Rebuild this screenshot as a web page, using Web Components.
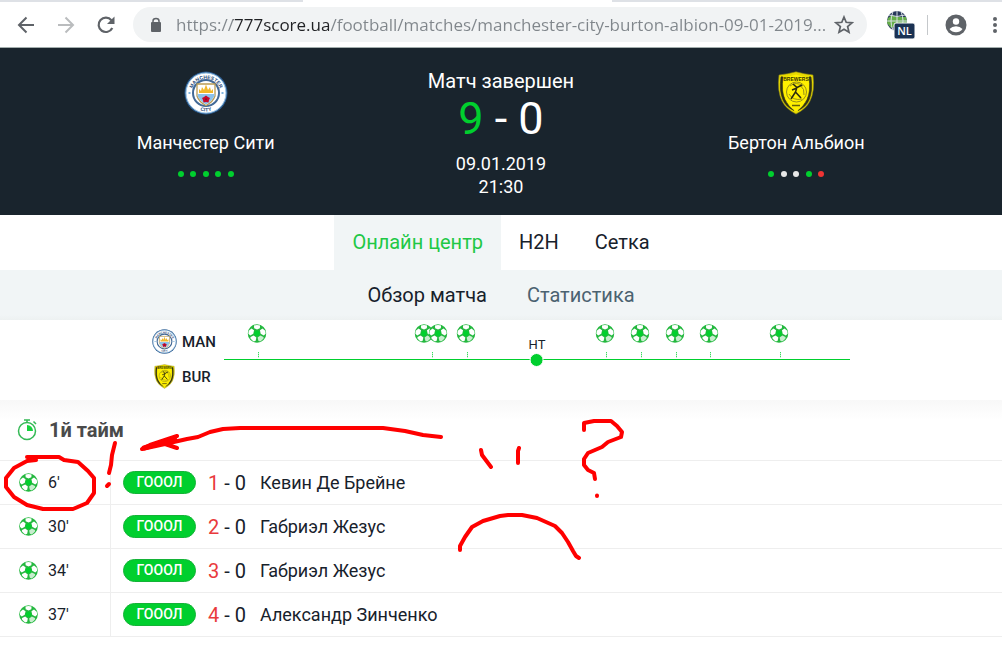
<!DOCTYPE html>
<html lang="ru">
<head>
<meta charset="utf-8">
<title>Манчестер Сити - Бертон Альбион</title>
<style>
    body {
        margin: 0;
        position: relative;
        overflow-x: hidden;
        background: #fff;
        color: #17212b;
        font-family: Roboto, "Liberation Sans", sans-serif;
        --green: #00cf2e;
        --dark: #19242d;
        --pale: #f1f5f6;
    }
</style>
</head>
<body>
<browser-bar></browser-bar>
<match-header>
    <team-card slot="home" form="wwwww">
        <club-crest slot="crest" club="city"></club-crest>
        Манчестер Сити
    </team-card>
    <team-card slot="away" form="wddwl">
        <club-crest slot="crest" club="burton"></club-crest>
        Бертон Альбион
    </team-card>
</match-header>
<match-tabs></match-tabs>
<match-timeline></match-timeline>
<match-events>1й тайм</match-events>
<pen-marks></pen-marks>

<script>
(function() {
    function define(name, html, setup) {
        const template = document.createElement("template")
        template.innerHTML = html
        customElements.define(name, class extends HTMLElement {
            constructor() {
                super()
                this.attachShadow({mode: "open"})
                this.shadowRoot.appendChild(template.content.cloneNode(true))
            }
            connectedCallback() {
                if (setup) setup(this, this.shadowRoot)
            }
        })
    }

    define("soccer-ball", `
<style>
    :host { display: block; width: 19px; height: 19px; }
    svg { display: block; width: 100%; height: 100%; }
</style>
<svg viewBox="0 0 20 20" aria-hidden="true">
    <circle cx="10" cy="10" r="9.8" fill="#24b83f"/>
    <g fill="#fff">
        <path d="M6.8 1.6Q10 .6 13.2 1.6L13 4.4 10 5.9 7 4.4Z"/>
        <path d="M1.3 7.2 4.2 4.7 6.9 6.7 6.1 10.2 2.9 12 .9 10.3Z"/>
        <path d="M18.7 7.2 15.8 4.7 13.1 6.7 13.9 10.2 17.1 12 19.1 10.3Z"/>
        <path d="M3.2 13.7 6.5 12 9.3 14.2 8.6 17.7 6.6 18.4Q4.5 17 3 15Z"/>
        <path opacity=".75" d="M16.8 13.7 13.5 12 10.7 14.2 11.4 17.7 13.4 18.4Q15.5 17 17 15Z"/>
    </g>
    <path d="M10 6.5 13.2 8.8 12 12.5H8L6.8 8.8Z" fill="#00d02c"/>
</svg>`)

    const crests = {
        city: `
<svg viewBox="0 0 44 44" role="img" aria-label="Manchester City">
    <defs>
        <path id="top" d="M7.6 24A14.5 14.5 0 1 1 36.4 24"/>
        <path id="bottom" d="M8 34A18.5 18.5 0 0 0 36 34"/>
    </defs>
    <circle cx="22" cy="22" r="21.5" fill="#2b5c91"/>
    <circle cx="22" cy="22" r="20" fill="#fff" stroke="#9bc5e6"/>
    <circle cx="22" cy="22" r="13" fill="#fff" stroke="#426996" stroke-width="2"/>
    <g font-family="Liberation Sans, sans-serif" font-weight="700" font-size="5" fill="#294b78" text-anchor="middle">
        <text><textPath href="#top" startOffset="50%">MANCHESTER</textPath></text>
        <text><textPath href="#bottom" startOffset="50%">CITY</textPath></text>
    </g>
    <path d="M13 13H31V25Q29 31 22 34.5 15 31 13 25Z" fill="#fff" stroke="#b99b54" stroke-width="1.3"/>
    <path d="M13.6 23H30.4V25Q28 30 22 33.5 16 30 13.6 25Z" fill="#8bc2ec"/>
    <path d="M15 22V18L17 20 18 16 20 19 22 13.5 24 19 26 16 27 20 29 18V22Z" fill="#f1b82a"/>
    <path d="M22 24.5 24 26 26 27 25 29 24.5 31.5 22 31 19.5 31.5 19 29 18 27 20 26Z" fill="#c7082d"/>
    <circle cx="22" cy="28.3" r="1" fill="#7e1730"/>
    <path d="M4.5 22H6.5M37.5 22H39.5" stroke="#83b6df" stroke-width="2"/>
</svg>`,
        burton: `
<svg viewBox="0 0 44 44" role="img" aria-label="Burton Albion">
    <path d="M5 4Q14 3 22 .8 30 3 39 4 41 20 36 30 32 38 22 43 12 38 8 30 3 20 5 4Z" fill="#e8da00" stroke="#8b8418" stroke-width=".6"/>
    <path d="M7 6Q7 5.5 9 6 7 20 11 28.5 14 35 20 39.5 12 36 9 29 5 20 7 6ZM37 6Q37 5.5 35 6 37 20 33 28.5 30 35 24 39.5 32 36 35 29 39 20 37 6Z" fill="#2f3018" stroke="#2f3018" stroke-width=".6"/>
    <path d="M9.5 6.5Q16 5.5 22 3.5 28 5.5 34.5 6.5 36 20 32.5 28 29.5 35 22 40.5 14.5 35 11.5 28 8 20 9.5 6.5Z" fill="#fff000"/>
    <text x="22" y="9.5" text-anchor="middle" font-family="Liberation Sans, sans-serif" font-weight="700" font-size="5" fill="#343400">BREWERS</text>
    <g fill="none" stroke="#8a841c" stroke-width=".9">
        <circle cx="22.5" cy="21" r="10"/>
        <path d="M16 15Q22 10 29 15M15 23Q19 30 28 28M26 14Q31 18 30 24"/>
    </g>
    <path d="M19 13 23 16.5 28 14M23 16 21.5 21 27 27M21.5 21 17 28M23 17 18 19" fill="none" stroke="#2b2b10" stroke-width="1.5"/>
    <path d="M18 34.5H26" stroke="#64600b" stroke-width="1.5"/>
</svg>`
    }

    define("club-crest", `
<style>
    :host { display: block; width: 44px; height: 44px; }
    svg { display: block; width: 100%; height: 100%; }
</style>`, (host, root) => {
        root.innerHTML += crests[host.getAttribute("club")]
    })

    define("browser-bar", `
<style>
    :host {
        display: block;
        background: #fff;
        border-bottom: 1px solid #a3aead;
    }
    .tabs {
        display: grid;
        grid-template-columns: 303fr 309fr 390fr;
        height: 2px;
    }
    .tabs i { background: #dee1e6; }
    .tabs i:nth-child(2) { background: #fff; }
    nav {
        display: flex;
        align-items: center;
        height: 45px;
        padding-left: 6px;
    }
    button {
        display: grid;
        place-items: center;
        flex: none;
        width: 40px;
        height: 36px;
        padding: 0;
        border: 0;
        background: none;
    }
    form {
        display: flex;
        align-items: center;
        flex: 1;
        min-width: 0;
        height: 35px;
        margin: 0 7px;
        padding: 0 11px 0 17px;
        border-radius: 18px;
        background: #f1f3f4;
    }
    form button { width: 24px; }
    /* the host name is darker than the rest of the address */
    input {
        flex: 1;
        min-width: 0;
        height: 32px;
        margin: 0 3px 0 14px;
        padding: 0;
        border: 0;
        outline: 0;
        font: 17px "Open Sans", "Noto Sans", sans-serif;
        color: #80868b;
        background: linear-gradient(90deg, #80868b 57px, #202124 57px 154px, #80868b 154px);
        -webkit-background-clip: text;
        background-clip: text;
        -webkit-text-fill-color: transparent;
    }
    .extension { width: 52px; }
    hr {
        width: 1px;
        height: 20px;
        margin: 0 8px 0 1px;
        border: 0;
        background: #c5c8cb;
    }
    .more { width: 14px; margin-left: 12px; }
</style>
<div class="tabs"><i></i><i></i><i></i></div>
<nav>
    <button aria-label="Back"><svg width="20" height="20" fill="none" stroke="#5f6368" stroke-width="2"><path d="M18 10H3M10.5 2.5 3 10 10.5 17.5"/></svg></button>
    <button aria-label="Forward"><svg width="20" height="20" fill="none" stroke="#babcbe" stroke-width="2"><path d="M2 10H17M9.5 2.5 17 10 9.5 17.5"/></svg></button>
    <button aria-label="Reload"><svg width="20" height="20"><path d="M16.3 13A7.2 7.2 0 1 1 15.4 5.2" fill="none" stroke="#5f6368" stroke-width="2.2"/><path d="M18.5 1.5V9H11Z" fill="#5f6368"/></svg></button>
    <form>
        <svg width="12" height="16" aria-hidden="true"><path d="M3 7V4Q3 1.5 6 1.5T9 4V7" fill="none" stroke="#5f6368" stroke-width="1.5"/><rect x="1" y="5" width="10" height="10" rx="1" fill="#5f6368"/></svg>
        <input aria-label="Address" value="https://777score.ua/football/matches/manchester-city-burton-albion-09-01-2019...">
        <button type="button" aria-label="Bookmark"><svg width="20" height="20"><path d="M10 2 12.2 7.3 18 7.8 13.6 11.5 15 17.2 10 14.2 5 17.2 6.4 11.5 2 7.8 7.8 7.3Z" fill="none" stroke="#5f6368" stroke-width="1.7"/></svg></button>
    </form>
    <button class="extension" aria-label="Extension"><svg width="32" height="30">
        <circle cx="13" cy="11" r="10" fill="#26365a"/>
        <path d="M4 8 8 5 12 7H17L22 7 23 12 19 18 12 16 7 18 3 13Z" fill="#65ae49"/>
        <path d="M13 1V21M3 11H23M5 5Q13 8 21 5M9 1.5Q5 11 9 20.5M17 1.5Q21 11 17 20.5" fill="none" stroke="#d8e1e5"/>
        <rect x="10" y="13" width="21" height="16" rx="2" fill="#1b3253" stroke="#fff"/>
        <text x="20.5" y="25" text-anchor="middle" font-family="Open Sans, sans-serif" font-size="11" font-weight="600" fill="#fff">NL</text>
    </svg></button>
    <hr>
    <button aria-label="Profile"><svg width="22" height="22"><circle cx="11" cy="11" r="10.5" fill="#5f6368"/><circle cx="11" cy="7.5" r="3.2" fill="#fff"/><path d="M4.5 15Q7 12.3 11 12.3T17.5 15Q15 18.3 11 18.3T4.5 15Z" fill="#fff"/></svg></button>
    <button class="more" aria-label="Menu"><svg width="4" height="18" fill="#5f6368"><circle cx="2" cy="3" r="2"/><circle cx="2" cy="9" r="2"/><circle cx="2" cy="15" r="2"/></svg></button>
</nav>`)

    define("team-card", `
<style>
    :host {
        display: flex;
        flex-direction: column;
        align-items: center;
        gap: 16px;
        padding-top: 2px;
    }
    h2 {
        margin: 0;
        font-size: 18px;
        font-weight: 400;
        line-height: 24px;
    }
    .form {
        display: flex;
        justify-content: space-between;
        width: 56px;
    }
    .form i {
        width: 6px;
        height: 6px;
        border-radius: 50%;
        background: var(--green);
    }
    .form .d { background: #e7e7e7; }
    .form .l { background: #ef3434; }
</style>
<slot name="crest"></slot>
<h2><slot></slot></h2>
<div class="form"></div>`, (host, root) => {
        root.querySelector(".form").innerHTML = [...host.getAttribute("form")].map(r => `<i class="${r}"></i>`).join("")
    })

    define("match-header", `
<style>
    :host {
        display: block;
        padding: 21px 58px 17px;
        background: var(--dark);
        color: #fff;
    }
    header {
        display: grid;
        grid-template-columns: repeat(3, 1fr);
        max-width: 886px;
        margin: 0 auto;
        text-align: center;
    }
    p {
        margin: 0;
        font-size: 20px;
        line-height: 24px;
    }
    h1 {
        margin: 0 0 7px;
        font-size: 45px;
        font-weight: 400;
        line-height: 52px;
    }
    h1 span { color: var(--green); }
    time {
        display: block;
        font-size: 18px;
        line-height: 23px;
    }
</style>
<header>
    <slot name="home"></slot>
    <div>
        <p>Матч завершен</p>
        <h1><span>9</span> - 0</h1>
        <time datetime="2019-01-09T21:30">09.01.2019<br>21:30</time>
    </div>
    <slot name="away"></slot>
</header>`)

    define("match-tabs", `
<style>
    :host { display: block; font-size: 20px; }
    nav {
        display: flex;
        justify-content: center;
    }
    a {
        color: #17212b;
        text-decoration: none;
    }
    .main a {
        padding: 0 18px;
        line-height: 55px;
    }
    .main .on {
        background: var(--pale);
        color: #21c845;
    }
    .sub {
        gap: 40px;
        line-height: 50px;
        background: linear-gradient(var(--pale) 90%, #edf1f1);
    }
    .sub a + a { color: #4b6270; }
</style>
<nav class="main">
    <a class="on" href="#center">Онлайн центр</a>
    <a href="#h2h">H2H</a>
    <a href="#draw">Сетка</a>
</nav>
<nav class="sub">
    <a href="#review">Обзор матча</a>
    <a href="#stats">Статистика</a>
</nav>`)

    // positions on the line, in percent of its length
    const goals = [
        {ball: 5.2, tick: 5.4},
        {ball: 32, tick: 33.2},
        {ball: 34.2},
        {ball: 38.7, tick: 38.8},
        {ball: 60.9, tick: 61},
        {ball: 66.5, tick: 66.6},
        {ball: 72.1, tick: 72.2},
        {ball: 77.4, tick: 77.6},
        {ball: 88.6, tick: 88.8}
    ]

    define("match-timeline", `
<style>
    :host {
        display: block;
        padding: 4px 16px 6px;
        background: #fff;
    }
    section {
        display: grid;
        grid-template-columns: 72px 1fr;
        max-width: 698px;
        margin: 0 auto;
    }
    .team {
        display: flex;
        align-items: center;
        gap: 5px;
        height: 35px;
        font-size: 15px;
        font-weight: 500;
    }
    club-crest { width: 25px; height: 25px; }
    .line {
        position: relative;
        height: 35px;
        border-bottom: 1px solid var(--green);
    }
    soccer-ball {
        position: absolute;
        top: 0;
        transform: translateX(-50%);
    }
    .tick {
        position: absolute;
        bottom: 1px;
        width: 1px;
        height: 6px;
        background: repeating-linear-gradient(#3ddb60 0 1px, #c4f3ce 1px 2px);
    }
    .half {
        position: absolute;
        left: 50%;
        bottom: -8px;
        display: flex;
        flex-direction: column;
        align-items: center;
        transform: translateX(-50%);
        font-size: 13px;
        line-height: 16px;
    }
    .half::after {
        content: "";
        width: 12px;
        height: 12px;
        border: 1px solid #fff;
        border-radius: 50%;
        background: var(--green);
    }
</style>
<section>
    <div>
        <div class="team"><club-crest club="city"></club-crest>MAN</div>
        <div class="team"><club-crest club="burton"></club-crest>BUR</div>
    </div>
    <div class="line"><span class="half">HT</span></div>
</section>`, (host, root) => {
        root.querySelector(".line").insertAdjacentHTML("beforeend", goals.map(g =>
            `<soccer-ball style="left:${g.ball}%"></soccer-ball>` +
            (g.tick ? `<i class="tick" style="left:${g.tick}%"></i>` : "")).join(""))
    })

    const events = [
        ["6'", 1, "Кевин Де Брейне"],
        ["30'", 2, "Габриэл Жезус"],
        ["34'", 3, "Габриэл Жезус"],
        ["37'", 4, "Александр Зинченко"]
    ]

    define("match-events", `
<style>
    :host {
        display: block;
        background: linear-gradient(#f8f8f8, #fff 20px);
    }
    h3 {
        display: flex;
        align-items: center;
        gap: 12px;
        height: 60px;
        margin: 0;
        padding-left: 17px;
        color: #4a4a4a;
        font-size: 20px;
        font-weight: 700;
    }
    table {
        width: 100%;
        border-collapse: collapse;
        border-bottom: 1px solid #eee;
    }
    tr { border-top: 1px solid #eee; }
    td { height: 43px; padding: 0; }
    td:first-child {
        width: 110px;
        border-right: 1px solid #eee;
        font-size: 16px;
    }
    .cell {
        display: flex;
        align-items: center;
        gap: 10px;
        padding-left: 19px;
    }
    .goal {
        gap: 12px;
        padding-left: 12px;
        font-size: 18px;
    }
    .badge {
        box-sizing: border-box;
        width: 73px;
        height: 23px;
        border: 1px solid #14b337;
        border-radius: 12px;
        background: var(--green);
        color: #fff;
        font-size: 14px;
        font-weight: 500;
        line-height: 21px;
        text-align: center;
    }
    .score { min-width: 40px; font-size: 20px; }
    .score b { color: #e93a3c; font-weight: 400; }
</style>
<h3>
    <svg width="20" height="22" aria-hidden="true">
        <circle cx="10" cy="12" r="8.5" fill="none" stroke="#35b956" stroke-width="1.5"/>
        <path d="M7 1H13M10 1V4M16.5 2.5 19 5" stroke="#35b956" stroke-width="1.5"/>
        <path d="M10 6A6 6 0 0 1 16 12H10Z" fill="#16d33e"/>
    </svg>
    <slot></slot>
</h3>
<table><tbody></tbody></table>`, (host, root) => {
        root.querySelector("tbody").innerHTML = events.map(([minute, score, player]) => `
<tr>
    <td><div class="cell"><soccer-ball></soccer-ball><span>${minute}</span></div></td>
    <td><div class="cell goal"><span class="badge">ГОООЛ</span><span class="score"><b>${score}</b> - 0</span><span>${player}</span></div></td>
</tr>`).join("")
    })

    // freehand drawing that lies over the page
    define("pen-marks", `
<style>
    :host {
        position: absolute;
        top: 0;
        left: 0;
        pointer-events: none;
    }
    svg { display: block; }
</style>
<svg width="640" height="570" fill="none" stroke="#f00" stroke-width="4" stroke-linecap="round" stroke-linejoin="round" aria-hidden="true">
    <path d="M27 457H59L64 460 78 462 88 471 94 478V493L87 503 73 509H43L27 505 14 497 6 487V478L14 468 27 461 36 460"/>
    <path d="M115 443 112 455 111 465 109 473M109 484 107 486"/>
    <path d="M441 437 423 435 405 431 383 428H240L223 429 210 432 198 437 187 439 165 444 142 449 150 445 162 441 177 436M165 444 177 448"/>
    <path d="M144 448 161 443 175 440" stroke-width="5"/>
    <path d="M481 450 482 455 491 467M519 448 518 451V463"/>
    <path d="M584 430V423L594 421H611L617 426 622 432 621 437 608 442 602 447 588 453 584 459V465L588 470 594 473 595 479M597 495.5V496"/>
    <path d="M460 550V546L465 537 472 527 483 521 500 516 508 515H522L537 518 555 526 562 533 568 542 573 551 576 556 579 558"/>
</svg>`)
})()
</script>
</body>
</html>
